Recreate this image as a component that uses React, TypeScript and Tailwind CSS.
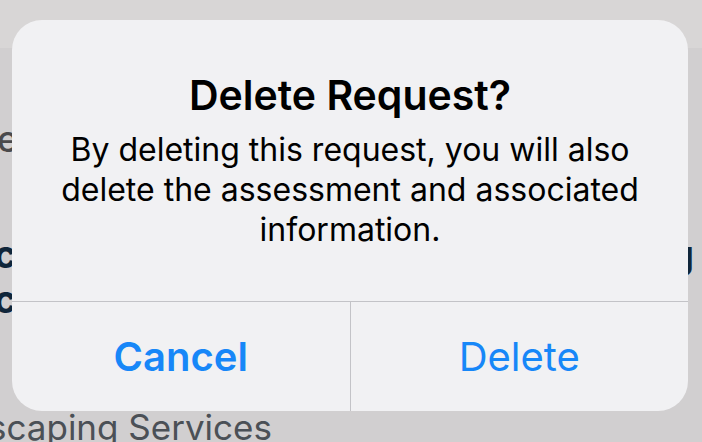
export default function App() {
  const font = { fontFamily: 'Inter, "Noto Sans", sans-serif' };
  return (
    <div className="relative w-[702px] h-[442px] overflow-hidden bg-[#d1cfd0]" style={font}>
      {/* page behind the alert */}
      <div className="h-[48px] bg-[#d8d6d6]" />
      <div className="absolute left-[-3px] top-[112px] text-[36px] font-medium text-[#4a4a4c]">e</div>
      <div className="absolute left-[-6px] top-[226px] text-[38px] font-bold text-[#10263a]">c</div>
      <div className="absolute left-[-6px] top-[271px] text-[38px] font-bold text-[#10263a]">c</div>
      <div className="absolute left-[670px] top-[226px] text-[38px] font-bold text-[#10263a]">g</div>
      <div className="absolute left-[-12px] top-[410px] text-[35px] leading-none text-[#4b5056] whitespace-nowrap">
        scaping Services
      </div>

      {/* alert */}
      <div className="absolute left-[12px] top-[20px] w-[676px] h-[391px] rounded-[30px] bg-[#f1f1f3] flex flex-col">
        <div className="h-[281px] flex flex-col items-center pt-[52px] px-4 text-center text-black">
          <div className="text-[41px] font-semibold leading-[46px]">Delete Request?</div>
          <div className="mt-[12px] text-[32px] leading-[40px] max-w-[620px]">
            By deleting this request, you will also delete the assessment and associated information.
          </div>
        </div>
        <div className="flex-1 flex border-t border-[#c3c3c7]">
          <button className="flex-1 flex items-center justify-center text-[40px] font-semibold text-[#1787f8]">
            Cancel
          </button>
          <div className="w-px bg-[#c3c3c7]" />
          <button className="flex-1 flex items-center justify-center text-[40px] text-[#1787f8]">
            Delete
          </button>
        </div>
      </div>
    </div>
  );
}
